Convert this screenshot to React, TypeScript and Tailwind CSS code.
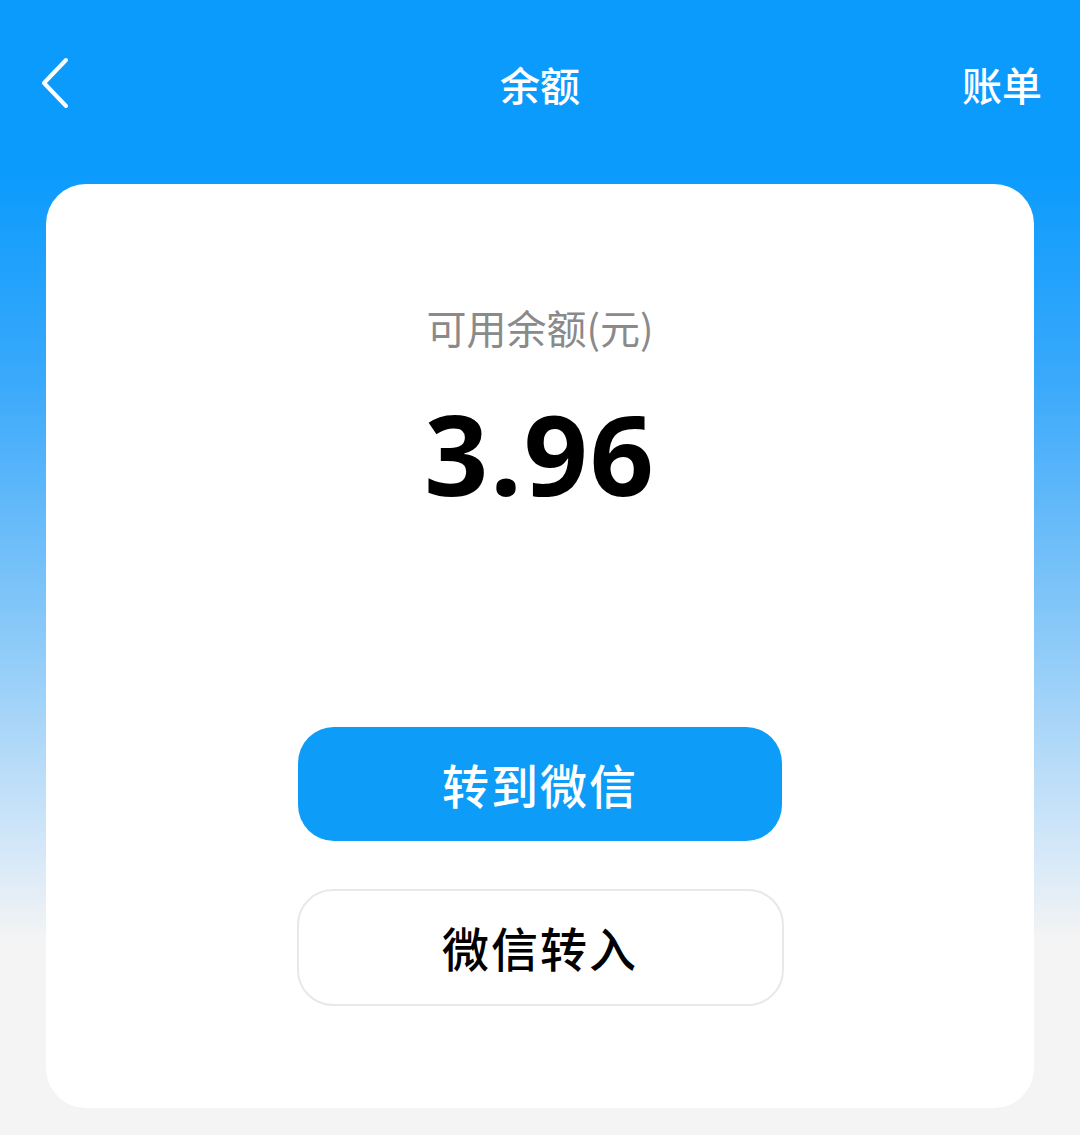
export default function App() {
  return (
    <div className="w-[1080px] h-[1135px] overflow-hidden bg-[linear-gradient(to_bottom,#0b9bfd_0px,#0b9bfd_170px,#3aa9fb_380px,#8ccaf8_640px,#d8e9f8_860px,#f4f4f4_940px,#f4f4f4_100%)] flex flex-col" style={{ fontFamily: "'Noto Sans CJK SC', 'Noto Sans', sans-serif" }}>
      <header className="h-[184px] relative flex items-start justify-center pt-[56px]">
        <button className="absolute left-[36px] top-[56px] w-[36px] h-[54px] flex items-center justify-center">
          <svg width="32" height="52" viewBox="0 0 32 52" fill="none" stroke="white" strokeWidth="4" strokeLinecap="round" strokeLinejoin="round">
            <path d="M28 3 L6 26 L28 49" />
          </svg>
        </button>
        <h1 className="text-[40px] leading-[56px] text-white font-medium">余额</h1>
        <span className="absolute right-[38px] top-[56px] text-[40px] leading-[56px] text-white font-medium">账单</span>
      </header>
      <main className="mx-[46px] h-[924px] bg-white rounded-[40px] flex flex-col items-center">
        <p className="mt-[117px] text-[40px] leading-[52px] text-[#8a8a8a]">可用余额(元)</p>
        <p className="mt-[44px] text-[112px] leading-[112px] font-bold text-black tracking-[2px]" style={{ fontFamily: "'Noto Sans', 'Open Sans', sans-serif" }}>3.96</p>
        <button className="mt-[218px] w-[484px] h-[114px] rounded-[36px] bg-[#0d9cf7] text-white text-[47px] tracking-[2px] font-medium">转到微信</button>
        <button className="mt-[48px] w-[487px] h-[117px] rounded-[36px] bg-white border-2 border-[#e8e8e8] text-black text-[47px] tracking-[2px] font-medium">微信转入</button>
      </main>
    </div>
  )
}
